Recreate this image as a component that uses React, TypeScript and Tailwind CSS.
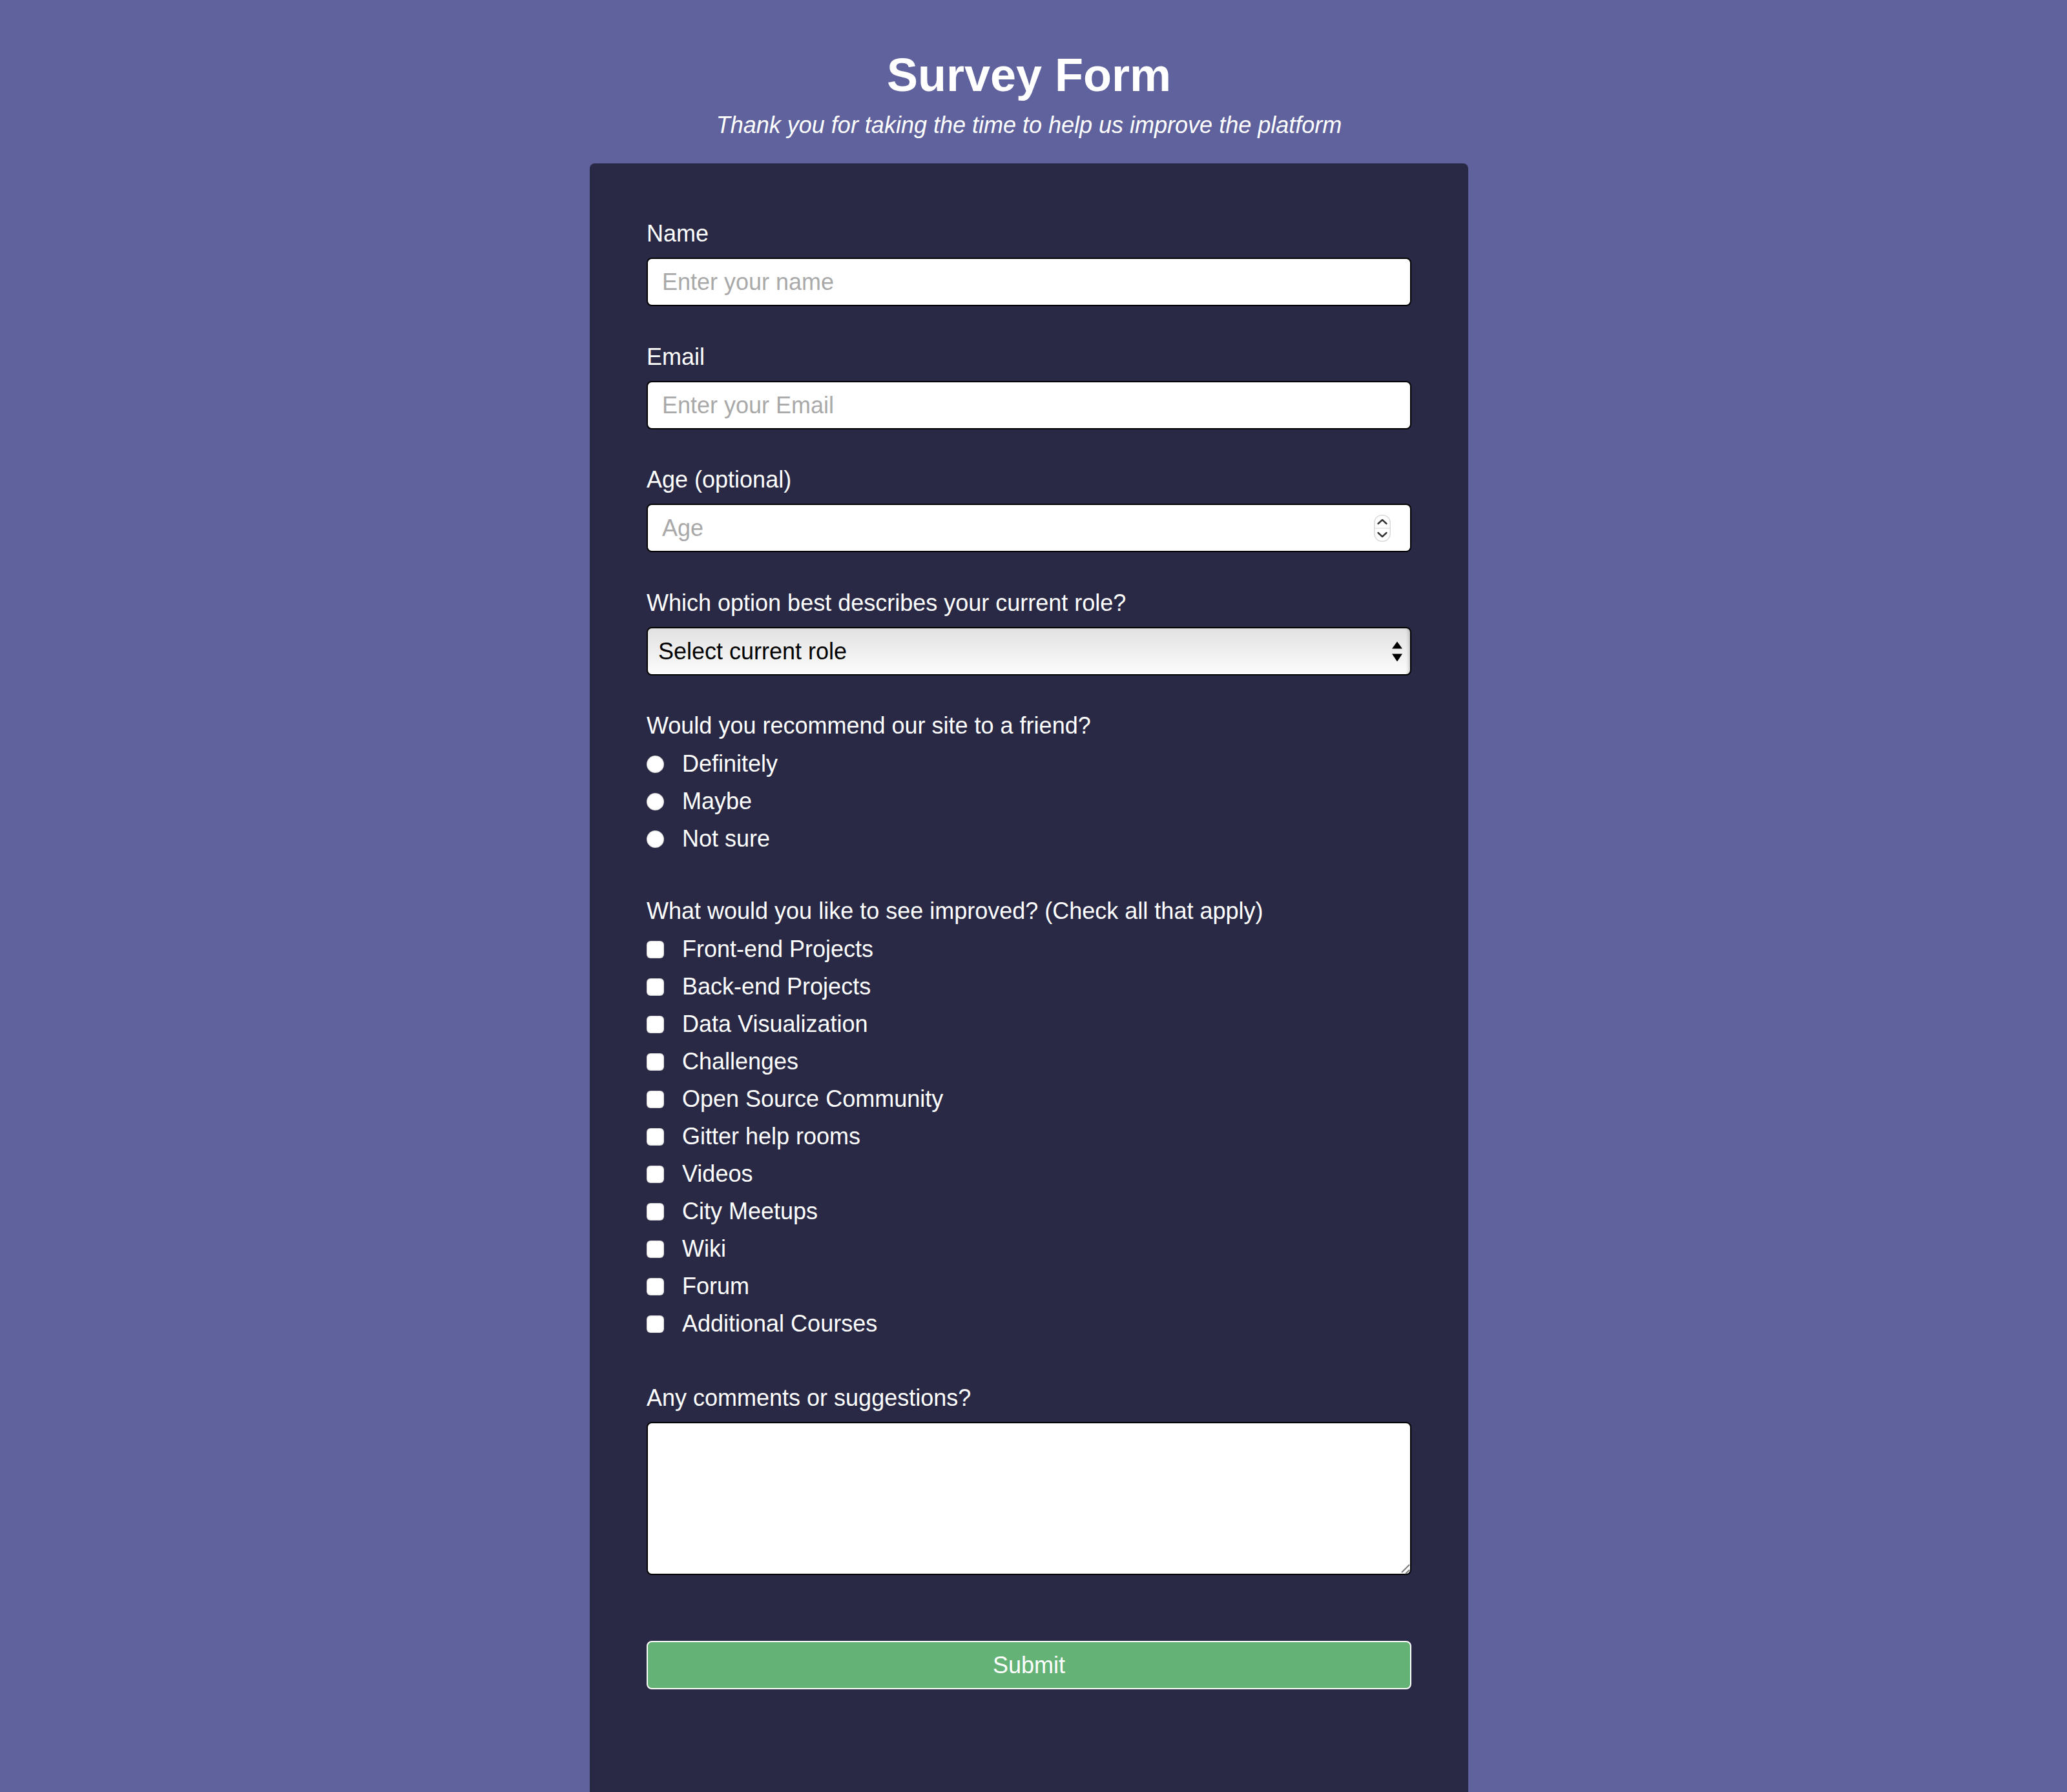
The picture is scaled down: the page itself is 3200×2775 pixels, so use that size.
import React from "react";

const recommend = ["Definitely", "Maybe", "Not sure"];
const improvements = [
  "Front-end Projects",
  "Back-end Projects",
  "Data Visualization",
  "Challenges",
  "Open Source Community",
  "Gitter help rooms",
  "Videos",
  "City Meetups",
  "Wiki",
  "Forum",
  "Additional Courses",
];

function TextField({
  label,
  placeholder,
  id,
  spaced,
}: {
  label: string;
  placeholder: string;
  id: string;
  spaced?: boolean;
}) {
  return (
    <div className={spaced ? "mb-[58px]" : "mb-[57px]"}>
      <label htmlFor={id} className="mb-[16px] block text-[36px] leading-[42px]">
        {label}
      </label>
      <input
        id={id}
        type="text"
        placeholder={placeholder}
        className="block h-[75px] w-full rounded-[8px] border-2 border-black bg-white px-[22px] text-[36px] text-black outline-none placeholder:text-[#a9a9a9]"
      />
    </div>
  );
}

export default function App() {
  return (
    <div className="h-[2775px] overflow-hidden bg-[#5f629c] pr-[14px] pt-[75px] font-['Liberation_Sans',Arial,sans-serif] text-white">
      <div className="flex flex-col items-center">
        <h1 className="text-[72px] font-bold leading-[83px]">Survey Form</h1>
        <p className="mt-[15px] text-[36px] italic leading-[41px]">
          Thank you for taking the time to help us improve the platform
        </p>
        <form className="mt-[39px] w-[1360px] rounded-[8px] bg-[#292945] px-[88px] pb-[176px] pt-[88px]">
          <TextField id="name" label="Name" placeholder="Enter your name" spaced />
          <TextField id="email" label="Email" placeholder="Enter your Email" />

          <div className="mb-[58px]">
            <label htmlFor="age" className="mb-[16px] block text-[36px] leading-[42px]">
              Age (optional)
            </label>
            <div className="relative">
              <input
                id="age"
                type="text"
                placeholder="Age"
                className="block h-[75px] w-full rounded-[8px] border-2 border-black bg-white px-[22px] text-[36px] text-black outline-none placeholder:text-[#a9a9a9]"
              />
              <svg
                className="absolute right-[32px] top-1/2 -translate-y-1/2"
                width="26"
                height="42"
                viewBox="0 0 26 42"
              >
                <rect x="0.75" y="0.75" width="24.5" height="40.5" rx="12" fill="#fff" stroke="#d9d9d9" strokeWidth="1.5" />
                <line x1="1" y1="21" x2="25" y2="21" stroke="#e2e2e2" strokeWidth="1.5" />
                <path d="M6.5 14 L13 8 L19.5 14" fill="none" stroke="#333" strokeWidth="2.4" strokeLinecap="round" strokeLinejoin="round" />
                <path d="M6.5 28 L13 34 L19.5 28" fill="none" stroke="#333" strokeWidth="2.4" strokeLinecap="round" strokeLinejoin="round" />
              </svg>
            </div>
          </div>

          <div className="mb-[57px]">
            <label htmlFor="role" className="mb-[16px] block text-[36px] leading-[42px]">
              Which option best describes your current role?
            </label>
            <div className="relative">
              <select
                id="role"
                defaultValue=""
                className="block h-[75px] w-full appearance-none rounded-[8px] border-2 border-black bg-linear-to-b from-[#e1e1e1] to-[#fcfcfc] px-[16px] text-[36px] text-black shadow-[inset_-6px_0_5px_-4px_rgba(0,0,0,0.2)] outline-none"
              >
                <option value="" disabled>
                  Select current role
                </option>
                <option value="student">Student</option>
                <option value="job">Full Time Job</option>
                <option value="learner">Full Time Learner</option>
                <option value="preferNo">Prefer not to say</option>
                <option value="other">Other</option>
              </select>
              <svg
                className="pointer-events-none absolute right-[14px] top-1/2 -translate-y-1/2"
                width="16"
                height="31"
                viewBox="0 0 16 31"
              >
                <polygon points="0,11 8,0 16,11" fill="#000" />
                <polygon points="0,19 16,19 8,31" fill="#000" />
              </svg>
            </div>
          </div>

          <div className="mb-[62px]">
            <p className="mb-[9px] text-[36px] leading-[42px]">Would you recommend our site to a friend?</p>
            {recommend.map((o) => (
              <label key={o} className="flex h-[58px] items-center text-[36px]">
                <input
                  type="radio"
                  name="recommend"
                  value={o}
                  className="m-0 h-[27px] w-[27px] shrink-0 appearance-none rounded-full bg-white shadow-[inset_0_0_2px_rgba(0,0,0,0.5)]"
                />
                <span className="ml-[28px]">{o}</span>
              </label>
            ))}
          </div>

          <div className="mb-[65px]">
            <p className="mb-[9px] text-[36px] leading-[42px]">
              What would you like to see improved? (Check all that apply)
            </p>
            {improvements.map((o) => (
              <label key={o} className="flex h-[58px] items-center text-[36px]">
                <input
                  type="checkbox"
                  value={o}
                  className="m-0 h-[27px] w-[27px] shrink-0 appearance-none rounded-[6px] bg-white shadow-[inset_0_0_2px_rgba(0,0,0,0.5)]"
                />
                <span className="ml-[28px]">{o}</span>
              </label>
            ))}
          </div>

          <div className="mb-[102px]">
            <label htmlFor="comments" className="mb-[16px] block text-[36px] leading-[42px]">
              Any comments or suggestions?
            </label>
            <div className="relative">
              <textarea
                id="comments"
                className="block h-[237px] w-full resize-none rounded-[8px] border-2 border-black bg-white px-[22px] py-[10px] text-[36px] text-black outline-none"
              />
              <svg className="pointer-events-none absolute bottom-0 right-0" width="18" height="18" viewBox="0 0 18 18">
                <line x1="3" y1="14" x2="15" y2="2" stroke="#7a7a7a" strokeWidth="2" />
                <line x1="9" y1="16" x2="15" y2="10" stroke="#7a7a7a" strokeWidth="2" />
              </svg>
            </div>
          </div>

          <button
            type="submit"
            className="block h-[75px] w-full rounded-[8px] border-2 border-white bg-[#64b276] text-[36px] text-white"
          >
            Submit
          </button>
        </form>
      </div>
    </div>
  );
}
